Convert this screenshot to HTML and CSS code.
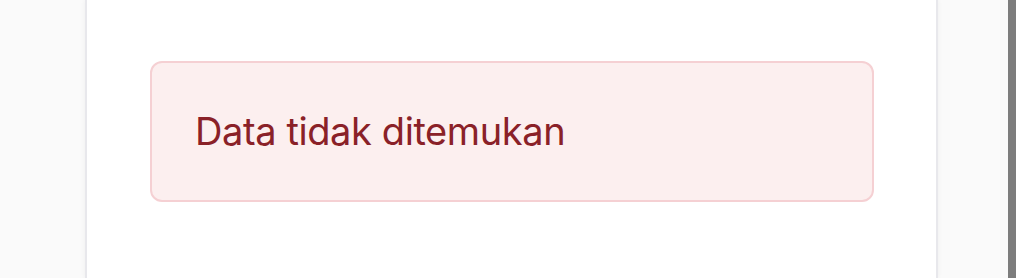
FILE: index.html
```html
<!DOCTYPE html>
<html lang="id">
<head>
<meta charset="utf-8">
<title>Data tidak ditemukan</title>
<link rel="stylesheet" href="styles.css">
</head>
<body>
<div class="page">
  <div class="gutter"></div>
  <main class="card">
    <div class="alert" role="alert">
      <p class="alert-text">Data tidak ditemukan</p>
    </div>
  </main>
  <div class="side">
    <div class="scrollbar"></div>
    <div class="edge"></div>
  </div>
</div>
</body>
</html>
```
FILE: styles.css
```css
html, body {
  margin: 0;
  padding: 0;
  height: 100%;
}
body {
  background: #fafafa;
  font-family: Inter, "Noto Sans", sans-serif;
  overflow: hidden;
}
.page {
  display: flex;
  height: 278px;
}
.gutter {
  width: 85px;
  flex: none;
}
.card {
  width: 853px;
  flex: none;
  background: #ffffff;
  border-left: 2px solid #e8e8ec;
  border-right: 2px solid #e8e8ec;
  box-shadow: 0 0 5px rgba(0,0,0,0.05);
  box-sizing: border-box;
  padding: 61px 62px 0 63px;
}
.alert {
  height: 141px;
  box-sizing: border-box;
  border: 2px solid #f5d0d3;
  border-radius: 12px;
  background: #fcefef;
  display: flex;
  align-items: center;
  padding: 0 0 2px 43px;
}
.alert-text {
  margin: 0;
  color: #8a2128;
  font-size: 38px;
  font-weight: 400;
  letter-spacing: -0.4px;
}
.side {
  flex: 1;
  display: flex;
  justify-content: flex-end;
}
.scrollbar {
  width: 8px;
  background: #7d7d7d;
}
.edge {
  width: 8px;
  background: #ffffff;
}
```
